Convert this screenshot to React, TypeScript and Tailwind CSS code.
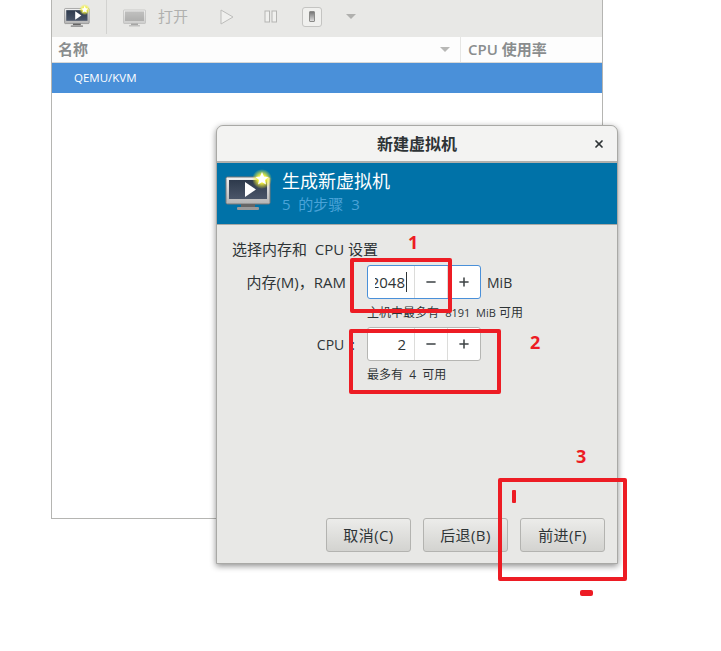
import { X, Minus, Plus } from 'lucide-react';

const font = { fontFamily: '"Open Sans", "Noto Sans CJK SC", sans-serif' };

function Monitor({ size, dim, star }: { size: number; dim?: boolean; star?: boolean }) {
  const id = `${size}${dim ? 'd' : 'n'}`;
  return (
    <svg width={size} height={size * 0.86} viewBox="0 0 50 43" className={dim ? 'opacity-50' : ''}>
      <defs>
        <linearGradient id={`frame${id}`} x1="0" y1="0" x2="0" y2="1">
          <stop offset="0" stopColor="#f2f2f2" />
          <stop offset="1" stopColor="#b4b4b4" />
        </linearGradient>
        <linearGradient id={`screen${id}`} x1="0" y1="0" x2="0" y2="1">
          <stop offset="0" stopColor={dim ? '#9a9a9a' : '#2e3a4c'} />
          <stop offset="1" stopColor={dim ? '#777' : '#4a5568'} />
        </linearGradient>
        <radialGradient id={`glow${id}`}>
          <stop offset="0.4" stopColor="#f4f23a" />
          <stop offset="1" stopColor="#f4f23a" stopOpacity="0" />
        </radialGradient>
      </defs>
      <rect x="1" y="8" width="44" height="27" rx="1.5" fill={`url(#frame${id})`} stroke="#777" />
      <rect x="4" y="11" width="38" height="19" fill={`url(#screen${id})`} />
      <rect x="16" y="35" width="14" height="3" fill="#666" />
      <rect x="12" y="38" width="22" height="3" rx="1" fill="#999" />
      {!dim && <path d="M20 13 L31 20.5 L20 28 Z" fill="#fff" />}
      {star && (
        <>
          <circle cx="37" cy="10" r="10" fill={`url(#glow${id})`} />
          <path d="M37 3 L39 7.5 L43.5 8 L40 11 L41 15.5 L37 13.2 L33 15.5 L34 11 L30.5 8 L35 7.5 Z" fill="#fff" />
        </>
      )}
    </svg>
  );
}

function SpinBox({ value, focused }: { value: string; focused?: boolean }) {
  return (
    <div className={`flex h-[34px] w-[114px] rounded-[3px] border bg-white ${focused ? 'border-[#4a90d9]' : 'border-[#b6b6b3]'}`}>
      <div className="flex w-[47px] items-center border-r border-[#dcdcda] pl-[7px] pr-[7px] text-[15px] text-[#2e3436]">
        <div className="flex flex-1 justify-end overflow-hidden">
          {focused ? <span className="border-r border-[#2e3436] pr-px leading-[20px]">{value}</span> : <span className="pr-[1px]">{value}</span>}
        </div>
      </div>
      <div className="flex w-[33px] items-center justify-center border-r border-[#dcdcda] text-[#3d4244]">
        <Minus size={14} strokeWidth={2.6} />
      </div>
      <div className="flex flex-1 items-center justify-center text-[#3d4244]">
        <Plus size={14} strokeWidth={2.6} />
      </div>
    </div>
  );
}

function FootButton({ label }: { label: string }) {
  return (
    <button className="h-[34px] w-[85px] rounded-[3px] border border-[#b3b3b0] bg-gradient-to-b from-[#ececea] to-[#d3d3d0] text-[15px] tracking-[0.4px] text-[#2e3436]">
      {label}
    </button>
  );
}

function Annotations() {
  return (
    <>
      <div className="absolute left-[350px] top-[258px] h-[55px] w-[102px] rounded-[2px] border-[4px] border-[#ed1c24]" />
      <div className="absolute left-[349px] top-[329px] h-[65px] w-[152px] rounded-[2px] border-[4px] border-[#ed1c24]" />
      <div className="absolute left-[498px] top-[478px] h-[103px] w-[129px] rounded-[2px] border-[4px] border-[#ed1c24]" />
      <div className="absolute left-[512px] top-[490px] h-[13px] w-[4px] rounded-[1px] bg-[#ed1c24]" />
      <div className="absolute left-[580px] top-[590px] h-[6px] w-[13px] rounded-[2px] bg-[#ed1c24]" />
      <span className="absolute left-[408px] top-[231px] text-[18px] font-bold leading-[22px] text-[#ed1c24]">1</span>
      <span className="absolute left-[530px] top-[331px] text-[18px] font-bold leading-[22px] text-[#ed1c24]">2</span>
      <span className="absolute left-[576px] top-[445px] text-[18px] font-bold leading-[22px] text-[#ed1c24]">3</span>
    </>
  );
}

export default function App() {
  return (
    <div className="relative h-[651px] w-[721px] overflow-hidden bg-white" style={font}>
      <div className="ml-[51px] flex h-[519px] w-[552px] flex-col border-x border-b border-[#b5b5b2] bg-white">
        <div className="flex h-[37px] items-center bg-[#e8e8e6] pb-[4px]">
          <div className="ml-[12px] flex w-[42px] items-center">
            <Monitor size={28} star />
          </div>
          <div className="h-[34px] w-px self-start bg-[#d2d2d0]" />
          <div className="ml-[16px] flex items-center">
            <Monitor size={25} dim />
          </div>
          <span className="ml-[10px] text-[15px] text-[#b0b0ae]">打开</span>
          <svg width="16" height="18" viewBox="0 0 16 18" className="ml-[31px]">
            <path d="M2 2 L14 9 L2 16 Z" fill="#f0f0ee" stroke="#bdbdbb" />
          </svg>
          <svg width="14" height="14" viewBox="0 0 14 14" className="ml-[29px]">
            <rect x="1" y="1" width="4.5" height="11" fill="#f0f0ee" stroke="#b5b5b3" />
            <rect x="8" y="1" width="4.5" height="11" fill="#f0f0ee" stroke="#b5b5b3" />
          </svg>
          <div className="ml-[24px] flex h-[20px] w-[20px] items-center justify-center rounded-[3px] border border-[#c4c4c2] bg-[#f0f0ee]">
            <div className="h-[11px] w-[6px] rounded-[1px] border border-[#8b8b89] bg-gradient-to-b from-[#777] to-[#ddd]" />
          </div>
          <div className="ml-[24px] h-0 w-0 border-x-[5px] border-t-[5px] border-x-transparent border-t-[#b0b0ae]" />
        </div>
        <div className="flex h-[26px] border-b border-[#d8d8d6] bg-[#fdfdfd] text-[15px] font-semibold text-[#8a8d8e]">
          <div className="flex flex-1 items-center justify-between border-r border-[#e6e6e4] pl-[6px] pr-[10px]">
            <span>名称</span>
            <div className="h-0 w-0 border-x-[5px] border-t-[5px] border-x-transparent border-t-[#b8b8b6]" />
          </div>
          <div className="flex w-[141px] items-center pl-[7px]">CPU 使用率</div>
        </div>
        <div className="flex h-[30px] items-center bg-[#4a90d9] pl-[22px] text-[11.5px] text-white">QEMU/KVM</div>
      </div>

      <div className="absolute left-[216px] top-[125px] flex h-[439px] w-[402px] flex-col rounded-t-[7px] border border-[#a9a9a6] bg-[#e8e8e6] shadow-[0_2px_6px_rgba(0,0,0,0.45)]">
        <div className="relative flex h-[37px] shrink-0 items-center justify-center rounded-t-[7px] border-b-2 border-[#b0b0ad] bg-[#f3f3f2] text-[16px] font-bold text-[#2e3436]">
          新建虚拟机
          <X size={12} strokeWidth={3.5} className="absolute right-[12px] top-[12px] text-[#2e3436]" />
        </div>
        <div className="flex h-[62px] shrink-0 items-center border-b border-[#a9a9a6] bg-[#0072a8] pl-[8px]">
          <div className="mb-[6px]">
            <Monitor size={50} star />
          </div>
          <div className="mb-[4px] ml-[7px]">
            <div className="text-[18px] leading-[25px] text-white">生成新虚拟机</div>
            <div className="text-[15px] leading-[21px] text-[#4aa3d8]">5 &nbsp;的步骤 &nbsp;3</div>
          </div>
        </div>
        <div className="flex flex-1 flex-col pb-[11px] pl-[15px] pr-[12px]">
          <div className="mt-[14px] text-[15px] leading-[20px] text-[#2e3436]">选择内存和 &nbsp;CPU 设置</div>
          <div className="mt-[6px] grid grid-cols-[135px_auto] text-[#2e3436]">
            <div className="flex h-[34px] items-center justify-end pr-[21px] text-[15px]">内存(M)，RAM</div>
            <div className="flex items-center gap-[6px]">
              <SpinBox value="2048" focused />
              <span className="text-[14px]">MiB</span>
            </div>
            <div />
            <div className="mt-[4px] h-[20px] text-[12px] leading-[20px]">
              主机中最多有 &nbsp;<span className="text-[11px]">8191 &nbsp;MiB</span> 可用
            </div>
            <div className="mt-[4px] flex h-[34px] items-center justify-end pr-[12px] text-[14px]">
              CPU<span className="ml-[7px]">:</span>
            </div>
            <div className="mt-[4px]">
              <SpinBox value="2" />
            </div>
            <div />
            <div className="mt-[4px] text-[12px] leading-[20px]">最多有 &nbsp;4 &nbsp;可用</div>
          </div>
          <div className="mt-auto flex justify-end gap-[12px]">
            <FootButton label="取消(C)" />
            <FootButton label="后退(B)" />
            <FootButton label="前进(F)" />
          </div>
        </div>
      </div>

      <Annotations />
    </div>
  );
}
